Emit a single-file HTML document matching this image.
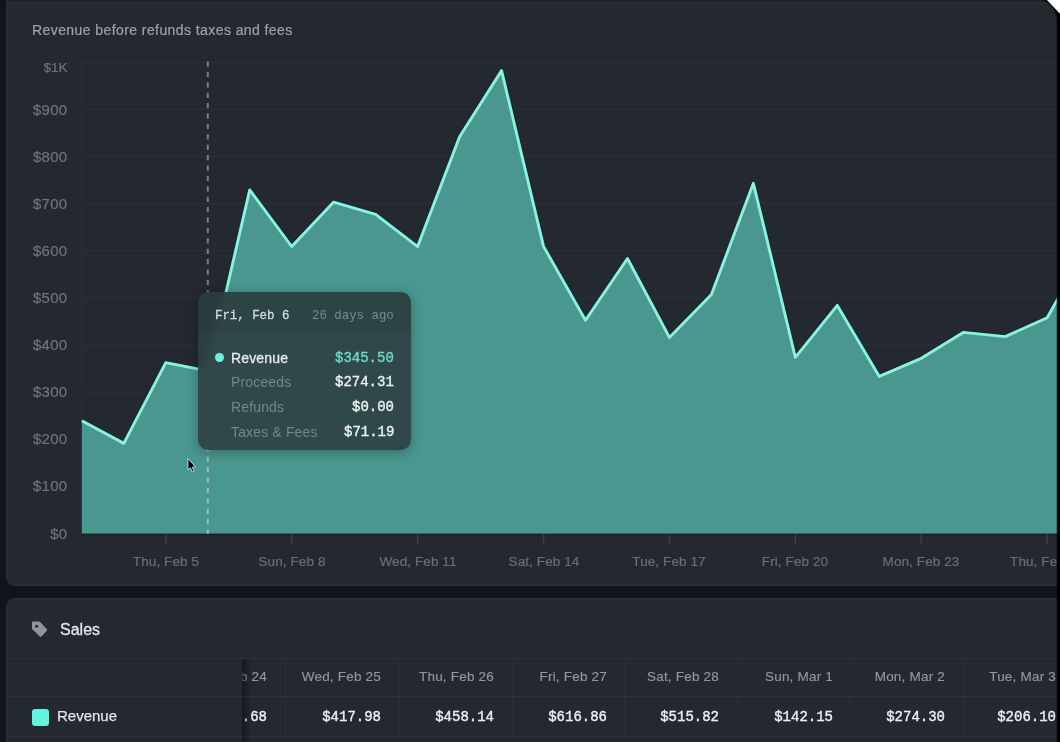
<!DOCTYPE html>
<html><head><meta charset="utf-8"><style>
*{margin:0;padding:0;box-sizing:border-box}
html,body{width:1060px;height:742px;overflow:hidden;background:#12141a;font-family:"Liberation Sans",sans-serif}
div{will-change:transform}
.card{position:absolute;background:#242830;border:1px solid #2b2f37;border-radius:9px;overflow:hidden}
#c1{left:6px;top:-20px;width:1100px;height:606px}
#c2{left:6px;top:598px;width:1100px;height:200px}
.title{position:absolute;left:32px;top:22px;font-size:14px;letter-spacing:0.42px;color:#9ea2a9;white-space:nowrap;-webkit-text-stroke:0.2px currentColor}
.yl{position:absolute;left:0;width:67.5px;text-align:right;font-size:15px;letter-spacing:0.3px;line-height:16px;color:#6f737b;-webkit-text-stroke:0.2px currentColor}
.xl{position:absolute;top:554px;width:120px;text-align:center;font-size:13.5px;letter-spacing:0.1px;line-height:16px;color:#6a6e76;-webkit-text-stroke:0.2px currentColor}
svg{position:absolute;left:0;top:0}
.tip{position:absolute;left:197.6px;top:292.3px;width:213.4px;height:157.5px;border-radius:10px;background:rgba(45,63,65,0.9);backdrop-filter:blur(6px);overflow:hidden;box-shadow:0 2px 12px rgba(0,0,0,0.3)}
.tiph{position:absolute;left:0;top:0;width:100%;height:40.5px;background:rgba(0,0,0,0.05);border-bottom:1px solid rgba(255,255,255,0.015)}
.mono{font-family:"Liberation Mono",monospace}
.tdate{position:absolute;left:17px;top:16px;font-size:12.4px;line-height:16px;color:#d4dada;-webkit-text-stroke:0.3px currentColor}
.tago{position:absolute;right:17.2px;top:16px;font-size:12.4px;line-height:16px;color:#7d8a8c}
.tl{position:absolute;left:32.8px;font-size:14px;letter-spacing:0.15px;line-height:18px;color:#748687;white-space:nowrap}
.tv{position:absolute;right:17.2px;font-size:14px;line-height:18px;color:#eef0f0;-webkit-text-stroke:0.4px currentColor;font-family:"Liberation Mono",monospace}
.dot{position:absolute;left:16.8px;top:61px;width:8.8px;height:8.8px;border-radius:50%;background:#6ff0dc}
.sales{position:absolute;left:59.5px;top:620px;font-size:16px;line-height:20px;color:#e4e6ea;-webkit-text-stroke:0.3px currentColor}
.hsep{position:absolute;left:6px;width:1100px;height:1px;background:#2d3139}
.vsep{position:absolute;top:658px;width:1px;height:80px;background:#2b2f37}
.th{position:absolute;top:669.3px;width:200px;text-align:right;font-size:13.5px;letter-spacing:0.2px;line-height:16px;color:#92969d;-webkit-text-stroke:0.15px currentColor;white-space:nowrap}
.td{position:absolute;top:707.5px;width:200px;text-align:right;font-size:14px;line-height:18px;color:#eceef0;-webkit-text-stroke:0.4px currentColor;font-family:"Liberation Mono",monospace;white-space:nowrap}
.sticky{position:absolute;left:7px;top:659px;width:235px;height:83px;background:#242830}
.shadow{position:absolute;left:242px;top:659px;width:9px;height:83px;background:linear-gradient(to right,rgba(0,0,0,0.4),rgba(0,0,0,0))}
.swatch{position:absolute;left:31.6px;top:709.2px;width:16.5px;height:16.5px;border-radius:3px;background:#62f2de}
.rev{position:absolute;left:57px;top:707px;font-size:15px;line-height:18px;color:#e4e6ea;-webkit-text-stroke:0.25px currentColor}
.strip{position:absolute;left:1058px;top:0;width:2px;height:742px;background:#000}
</style></head><body>
<div class="card" id="c1"></div>
<div style="position:absolute;left:6px;top:0;width:1060px;height:1.6px;background:#212328"></div><div style="position:absolute;left:6px;top:2.3px;width:1060px;height:1px;background:#2b2e34"></div>
<div class="title">Revenue before refunds taxes and fees</div>
<div class="yl" style="top:525.60px">$0</div><div class="yl" style="top:478.48px">$100</div><div class="yl" style="top:431.36px">$200</div><div class="yl" style="top:384.24px">$300</div><div class="yl" style="top:337.12px">$400</div><div class="yl" style="top:290.00px">$500</div><div class="yl" style="top:242.88px">$600</div><div class="yl" style="top:195.76px">$700</div><div class="yl" style="top:148.64px">$800</div><div class="yl" style="top:101.52px">$900</div><div class="yl" style="top:59.50px;letter-spacing:0;font-size:13.5px;width:67.5px">$1K</div>
<svg width="1060" height="742" viewBox="0 0 1060 742">
<defs><clipPath id="cp"><rect x="0" y="0" width="1058" height="742"/></clipPath></defs>
<g clip-path="url(#cp)">
<line x1="82" y1="533.60" x2="1100" y2="533.60" stroke="#2d3139" stroke-width="1"/><line x1="82" y1="486.48" x2="1100" y2="486.48" stroke="#2d3139" stroke-width="1"/><line x1="82" y1="439.36" x2="1100" y2="439.36" stroke="#2d3139" stroke-width="1"/><line x1="82" y1="392.24" x2="1100" y2="392.24" stroke="#2d3139" stroke-width="1"/><line x1="82" y1="345.12" x2="1100" y2="345.12" stroke="#2d3139" stroke-width="1"/><line x1="82" y1="298.00" x2="1100" y2="298.00" stroke="#2d3139" stroke-width="1"/><line x1="82" y1="250.88" x2="1100" y2="250.88" stroke="#2d3139" stroke-width="1"/><line x1="82" y1="203.76" x2="1100" y2="203.76" stroke="#2d3139" stroke-width="1"/><line x1="82" y1="156.64" x2="1100" y2="156.64" stroke="#2d3139" stroke-width="1"/><line x1="82" y1="109.52" x2="1100" y2="109.52" stroke="#2d3139" stroke-width="1"/><line x1="82" y1="62.40" x2="1100" y2="62.40" stroke="#2d3139" stroke-width="1"/>
<line x1="82" y1="62" x2="82" y2="534" stroke="#2a2e36" stroke-width="1"/>
<polyline points="81.86,420.80 123.83,443.40 165.80,362.60 207.77,370.80 249.74,189.90 291.71,246.50 333.68,202.10 375.65,214.30 417.62,246.60 459.59,136.80 501.56,70.60 543.53,246.40 585.50,320.30 627.47,258.50 669.44,337.40 711.41,294.50 753.38,183.30 795.35,357.30 837.32,305.40 879.29,376.40 921.26,358.30 963.23,332.40 1005.20,336.60 1047.17,317.70 1089.14,242.90" fill="none" stroke="#0c2d2d" stroke-opacity="0.4" stroke-width="5.6" stroke-linejoin="round"/>
<path d="M81.86,533.60 L81.86,420.80 L123.83,443.40 L165.80,362.60 L207.77,370.80 L249.74,189.90 L291.71,246.50 L333.68,202.10 L375.65,214.30 L417.62,246.60 L459.59,136.80 L501.56,70.60 L543.53,246.40 L585.50,320.30 L627.47,258.50 L669.44,337.40 L711.41,294.50 L753.38,183.30 L795.35,357.30 L837.32,305.40 L879.29,376.40 L921.26,358.30 L963.23,332.40 L1005.20,336.60 L1047.17,317.70 L1089.14,242.90 L1089.14,533.60 Z" fill="#4a978f"/>
<line x1="82" y1="534.6" x2="1058" y2="534.6" stroke="#1a2126" stroke-width="1.4"/>
<polyline points="81.86,420.80 123.83,443.40 165.80,362.60 207.77,370.80 249.74,189.90 291.71,246.50 333.68,202.10 375.65,214.30 417.62,246.60 459.59,136.80 501.56,70.60 543.53,246.40 585.50,320.30 627.47,258.50 669.44,337.40 711.41,294.50 753.38,183.30 795.35,357.30 837.32,305.40 879.29,376.40 921.26,358.30 963.23,332.40 1005.20,336.60 1047.17,317.70 1089.14,242.90" fill="none" stroke="#8af2de" stroke-width="2.9" stroke-linejoin="round"/>
<line x1="165.80" y1="534.5" x2="165.80" y2="543.8" stroke="#3b3f47" stroke-width="1.6"/><line x1="291.71" y1="534.5" x2="291.71" y2="543.8" stroke="#3b3f47" stroke-width="1.6"/><line x1="417.62" y1="534.5" x2="417.62" y2="543.8" stroke="#3b3f47" stroke-width="1.6"/><line x1="543.53" y1="534.5" x2="543.53" y2="543.8" stroke="#3b3f47" stroke-width="1.6"/><line x1="669.44" y1="534.5" x2="669.44" y2="543.8" stroke="#3b3f47" stroke-width="1.6"/><line x1="795.35" y1="534.5" x2="795.35" y2="543.8" stroke="#3b3f47" stroke-width="1.6"/><line x1="921.26" y1="534.5" x2="921.26" y2="543.8" stroke="#3b3f47" stroke-width="1.6"/><line x1="1047.17" y1="534.5" x2="1047.17" y2="543.8" stroke="#3b3f47" stroke-width="1.6"/>
<line x1="207.8" y1="61.5" x2="207.8" y2="534" stroke="rgba(255,255,255,0.4)" stroke-width="2" stroke-dasharray="5.2 5.2"/>
</g>
</svg>
<div class="xl" style="left:105.80px">Thu, Feb 5</div><div class="xl" style="left:231.71px">Sun, Feb 8</div><div class="xl" style="left:357.62px">Wed, Feb 11</div><div class="xl" style="left:483.53px">Sat, Feb 14</div><div class="xl" style="left:609.44px">Tue, Feb 17</div><div class="xl" style="left:735.35px">Fri, Feb 20</div><div class="xl" style="left:861.26px">Mon, Feb 23</div><div class="xl" style="left:987.17px">Thu, Feb 26</div>
<div class="tip">
  <div class="tiph"></div>
  <div class="tdate mono">Fri, Feb 6</div>
  <div class="tago mono">26 days ago</div>
  <div class="dot"></div>
  <div class="tl" style="top:56.6px;color:#e8eaea;-webkit-text-stroke:0.3px currentColor">Revenue</div>
  <div class="tv" style="top:56.6px;color:#6cd8c8">$345.50</div>
  <div class="tl" style="top:81.3px">Proceeds</div>
  <div class="tv" style="top:81.3px">$274.31</div>
  <div class="tl" style="top:106px">Refunds</div>
  <div class="tv" style="top:106px">$0.00</div>
  <div class="tl" style="top:130.5px">Taxes &amp; Fees</div>
  <div class="tv" style="top:130.5px">$71.19</div>
</div>
<svg width="1060" height="742" style="pointer-events:none">
<path d="M187.9,458.5 L187.9,470 L190.4,467.8 L192.3,472 L194,471.2 L192.2,467.2 L195.5,467 Z" fill="#000" stroke="#cfe" stroke-width="0.8"/>
</svg>
<div class="card" id="c2"></div>
<svg width="1060" height="742" style="left:0;top:0">
<path d="M33.2,622.7 L39.3,622.7 L46,630 L40.6,635.6 L33.2,628.4 Z" fill="#91959c" stroke="#91959c" stroke-width="2.4" stroke-linejoin="round"/>
<circle cx="36.6" cy="626.2" r="1.5" fill="#242830"/>
</svg>
<div class="sales">Sales</div>
<div class="hsep" style="top:658px"></div>
<div class="hsep" style="top:695.8px"></div>
<div class="hsep" style="top:736px"></div>
<div class="th" style="left:67.20px">Tue, Feb 24</div><div class="td" style="left:67.20px">$311.68</div><div class="th" style="left:180.60px">Wed, Feb 25</div><div class="td" style="left:180.60px">$417.98</div><div class="th" style="left:294.20px">Thu, Feb 26</div><div class="td" style="left:294.20px">$458.14</div><div class="th" style="left:407.10px">Fri, Feb 27</div><div class="td" style="left:407.10px">$616.86</div><div class="th" style="left:519.40px">Sat, Feb 28</div><div class="td" style="left:519.40px">$515.82</div><div class="th" style="left:632.50px">Sun, Mar 1</div><div class="td" style="left:632.50px">$142.15</div><div class="th" style="left:744.50px">Mon, Mar 2</div><div class="td" style="left:744.50px">$274.30</div><div class="th" style="left:856.00px">Tue, Mar 3</div><div class="td" style="left:856.00px">$206.10</div><div class="vsep" style="left:284.5px"></div><div class="vsep" style="left:398.7px"></div><div class="vsep" style="left:512.2px"></div><div class="vsep" style="left:624.1px"></div><div class="vsep" style="left:737.0px"></div><div class="vsep" style="left:848.7px"></div><div class="vsep" style="left:962.5px"></div>
<div class="sticky"></div>
<div class="shadow"></div>
<div class="hsep" style="top:658px;width:237px;left:6px"></div>
<div class="hsep" style="top:695.8px;width:237px;left:6px"></div>
<div class="hsep" style="top:736px;width:237px;left:6px"></div>
<div class="swatch"></div>
<div class="rev">Revenue</div>

<svg width="1060" height="742" style="left:0;top:0"><path d="M1043,0 L1060,0 L1060,742 L1057.2,742 L1057.2,22 Q1057.2,6 1043,0 Z" fill="#000"/><path d="M1042,0 L1060,0 L1060,742 L1056.3,742 L1056.3,22 Q1056.3,6 1042,0 Z" fill="#000" opacity="0.35"/><path d="M1046.4,-0.5 L1060.5,-0.5 L1060.5,14.3 Z" fill="#fff"/></svg>
</body></html>
